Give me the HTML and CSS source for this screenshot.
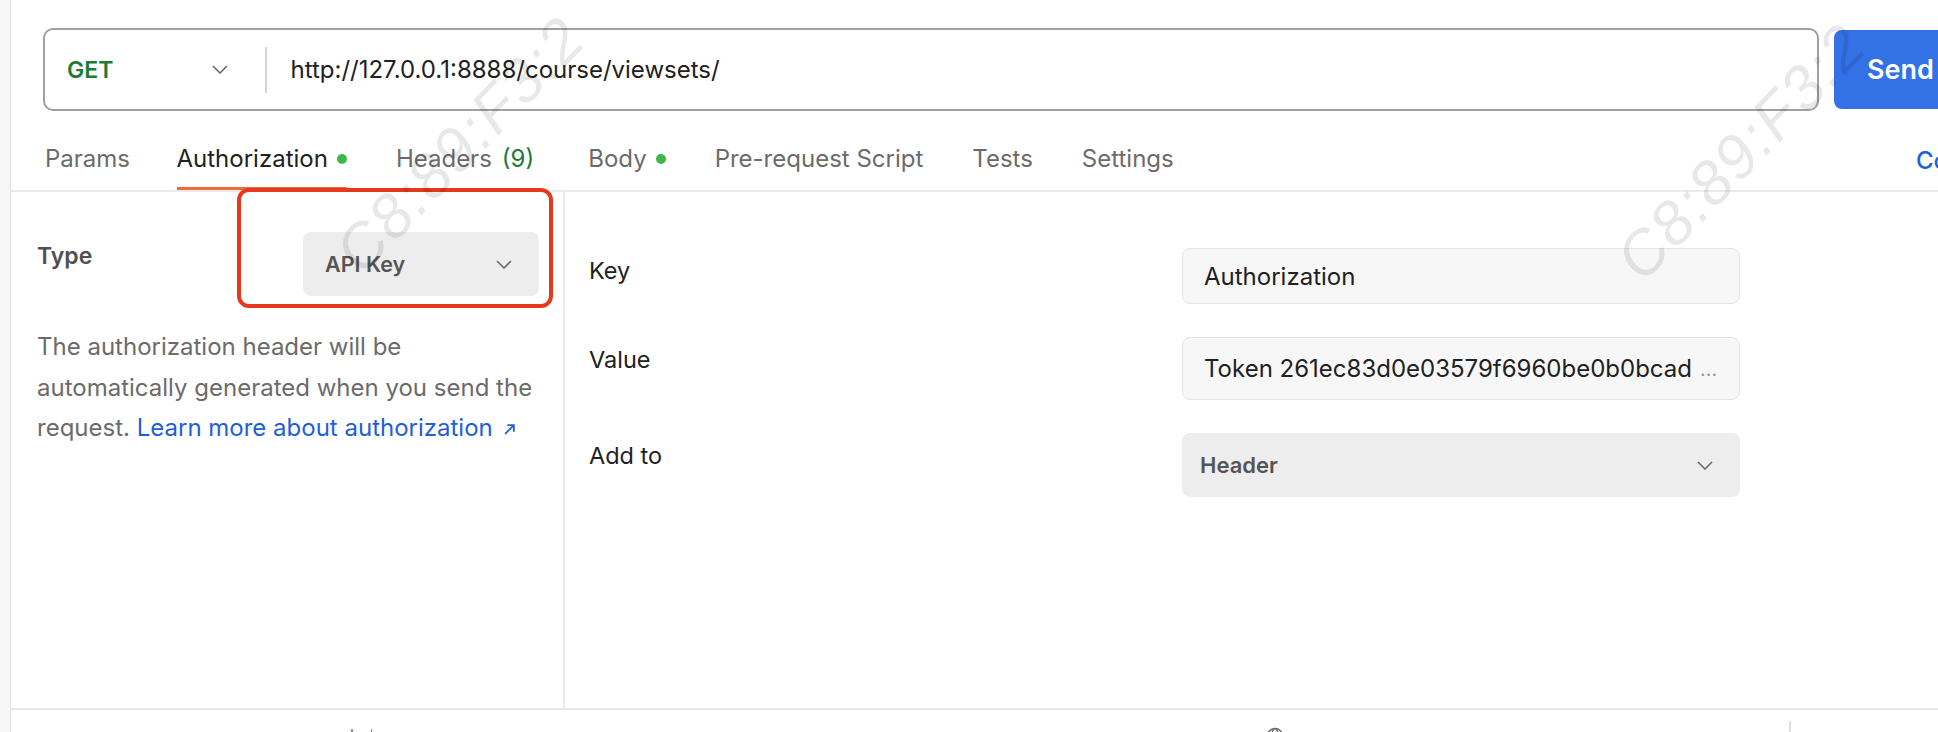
FILE: index.html
```html
<!DOCTYPE html>
<html lang="en">
<head>
<meta charset="utf-8">
<title>Request – Authorization</title>
<link rel="stylesheet" href="styles.css">
</head>
<body>
<div class="app">
  <div class="rail"></div>
  <div class="main">
    <div class="urlrow">
      <div class="urlbox">
        <div class="method">
          <span class="get">GET</span>
          <svg class="chev" width="16" height="9" viewBox="0 0 16 9"><path d="M1 1 L8 8 L15 1" fill="none" stroke="#6b6b6b" stroke-width="1.6"/></svg>
        </div>
        <div class="urlsep"></div>
        <div class="urltext">http://127.0.0.1:8888/course/viewsets/</div>
      </div>
      <div class="send">Send</div>
    </div>

    <div class="tabs">
      <div class="tab params">Params</div>
      <div class="tab active">Authorization<span class="dot"></span></div>
      <div class="tab headers">Headers<span class="count">(9)</span></div>
      <div class="tab">Body<span class="dot"></span></div>
      <div class="tab">Pre-request Script</div>
      <div class="tab">Tests</div>
      <div class="tab">Settings</div>
      <div class="cookies">Cookies</div>
    </div>

    <div class="content">
      <div class="authside">
        <div class="typerow">
          <div class="typelabel">Type</div>
          <div class="select">
            <span>API Key</span>
            <svg width="16" height="9" viewBox="0 0 16 9"><path d="M1 1 L8 8 L15 1" fill="none" stroke="#6b6b6b" stroke-width="1.6"/></svg>
          </div>
        </div>
        <p class="help">The authorization header will be automatically generated when you send the request. <a class="link">Learn more about authorization <svg class="ext" width="13" height="13" viewBox="0 0 12 12"><path d="M2 10 L10 2 M4 2 H10 V8" fill="none" stroke="#1f5fd6" stroke-width="1.7"/></svg></a></p>
      </div>
      <div class="authform">
        <div class="flabel">Key</div>
        <div class="field key">Authorization</div>
        <div class="flabel">Value</div>
        <div class="field value"><span class="tok">Token 261ec83d0e03579f6960be0b0bcad</span><span class="ell">...</span></div>
        <div class="flabel">Add to</div>
        <div class="select wide">
          <span>Header</span>
          <svg width="16" height="9" viewBox="0 0 16 9"><path d="M1 1 L8 8 L15 1" fill="none" stroke="#6b6b6b" stroke-width="1.6"/></svg>
        </div>
      </div>
    </div>

    <div class="footer">
      <span class="fmark m1"></span>
      <span class="fmark m2"></span>
      <svg class="globe" width="18" height="18" viewBox="0 0 18 18"><circle cx="9" cy="9" r="7.5" fill="none" stroke="#6b6b6b" stroke-width="1.6"/><ellipse cx="9" cy="9" rx="3.2" ry="7.5" fill="none" stroke="#6b6b6b" stroke-width="1.4"/></svg>
      <span class="fsep"></span>
    </div>
  </div>

  <div class="annot"></div>
  <div class="wm wm1">C8:89:F3:2</div>
  <div class="wm wm2">C8:89:F3:2</div>
</div>
</body>
</html>
```

FILE: styles.css
```css
* { box-sizing: border-box; }
html, body { margin: 0; padding: 0; }
body {
  width: 1938px;
  height: 732px;
  overflow: hidden;
  background: #ffffff;
  font-family: Inter, "Noto Sans", "Liberation Sans", sans-serif;
  color: #212121;
}
.app {
  position: relative;
  display: flex;
  width: 1938px;
  height: 732px;
  overflow: hidden;
}
.rail {
  width: 11px;
  flex: none;
  background: #f6f6f6;
  border-right: 1.5px solid #e3e3e3;
}
.main {
  flex: 1;
  min-width: 0;
  height: 732px;
  display: flex;
  flex-direction: column;
}

/* URL row */
.urlrow {
  flex: none;
  display: flex;
  align-items: center;
  gap: 15px;
  padding: 28px 0 0 32px;
  height: 111px;
}
.urlbox {
  width: 1776px;
  height: 83px;
  flex: none;
  display: flex;
  align-items: center;
  border: 2px solid #a0a0a0;
  border-radius: 10px;
  padding-left: 22px;
}
.method {
  width: 198px;
  display: flex;
  align-items: center;
  justify-content: space-between;
  padding-right: 37px;
}
.get {
  color: #1e7a34;
  font-weight: 600;
  font-size: 23px;
}
.urlsep {
  width: 1.5px;
  height: 46px;
  background: #d4d4d4;
}
.urltext {
  margin-left: 24px;
  font-size: 24px;
  color: #212121;
}
.send {
  flex: none;
  width: 200px;
  height: 79px;
  background: #3471e6;
  border-radius: 8px;
  color: #ffffff;
  font-weight: 600;
  font-size: 27px;
  display: flex;
  align-items: center;
  padding-left: 33px;
}

/* Tabs */
.tabs {
  flex: none;
  display: flex;
  align-items: stretch;
  height: 81px;
  border-bottom: 2px solid #ebebeb;
  padding-left: 34px;
  gap: 49px;
  font-size: 24px;
}
.tab {
  display: flex;
  align-items: center;
  padding-top: 19px;
  border-bottom: 3px solid transparent;
  color: #6b6b6b;
  white-space: nowrap;
}
.tab.params {
  margin-right: -2.5px;
}
.tab.active {
  color: #212121;
  border-bottom-color: #f26b3a;
}
.tab.headers {
  margin-right: 5px;
}
.dot {
  width: 10px;
  height: 10px;
  border-radius: 50%;
  background: #3db84d;
  margin-left: 9px;
}
.count {
  color: #1e7a34;
  margin-left: 10px;
}
.cookies {
  margin-left: auto;
  width: 22px;
  flex: none;
  display: flex;
  align-items: center;
  padding-top: 19px;
  white-space: nowrap;
  color: #1f5fd6;
  font-weight: 500;
}

/* Content */
.content {
  flex: none;
  display: flex;
  height: 518px;
  border-bottom: 2px solid #e8e8e8;
}
.authside {
  width: 554px;
  flex: none;
  border-right: 2px solid #ebebeb;
  padding: 40px 20px 0 26px;
}
.typerow {
  display: flex;
  align-items: flex-start;
}
.typelabel {
  width: 266px;
  padding-top: 12px;
  line-height: 24px;
  font-size: 23px;
  font-weight: 600;
  color: #505050;
}
.select {
  width: 236px;
  height: 64px;
  background: #ededed;
  border-radius: 8px;
  display: flex;
  align-items: center;
  justify-content: space-between;
  padding: 0 27px 0 22px;
  font-size: 21.5px;
  font-weight: 600;
  color: #555555;
}
.help {
  margin: 31px 0 0 0;
  font-size: 24px;
  line-height: 40.5px;
  color: #6b6b6b;
  max-width: 505px;
}
.link {
  color: #1f5fd6;
}
.ext {
  margin-left: 3px;
}

.authform {
  flex: 1;
  display: grid;
  grid-template-columns: 593px 558px;
  grid-template-rows: 56px 63px 64px;
  row-gap: 33px;
  align-content: start;
  padding: 56px 0 0 24px;
}
.flabel {
  padding-top: 11px;
  line-height: 24px;
  font-size: 23.5px;
  color: #212121;
}
.field {
  background: #f7f7f7;
  border: 1.5px solid #e4e4e4;
  border-radius: 8px;
  display: flex;
  align-items: center;
  padding-left: 21px;
  font-size: 24px;
  color: #212121;
  white-space: nowrap;
  overflow: hidden;
}
.ell {
  color: #9a9a9a;
  margin-left: 8px;
  font-size: 20px;
}
.select.wide {
  width: 558px;
  padding: 0 27px 0 18px;
  font-size: 22px;
}

/* Footer */
.footer {
  flex: 1;
  min-height: 0;
  overflow: hidden;
  display: flex;
  align-items: flex-start;
}
.fmark {
  flex: none;
  width: 1.5px;
  height: 4px;
  background: #8a8a8a;
  margin-top: 19px;
}
.m1 { margin-left: 340px; }
.m2 { margin-left: 18px; }
.globe {
  margin-left: 894px;
  margin-top: 17px;
  flex: none;
}
.fsep {
  flex: none;
  width: 1.5px;
  height: 12px;
  background: #dddddd;
  margin-left: 505px;
  margin-top: 11px;
}

/* Overlays */
.annot {
  position: absolute;
  left: 237px;
  top: 188px;
  width: 316px;
  height: 120px;
  border: 4px solid #e6391c;
  border-radius: 12px;
  pointer-events: none;
}
.wm {
  position: absolute;
  font-family: "Liberation Sans", sans-serif;
  font-style: italic;
  font-size: 62px;
  letter-spacing: 2px;
  color: rgba(0, 0, 0, 0.09);
  transform-origin: 0 100%;
  transform: rotate(-46deg);
  white-space: nowrap;
  pointer-events: none;
  line-height: 1;
}
.wm1 { left: 369px; top: 222px; }
.wm2 { left: 1650px; top: 229px; }
```
